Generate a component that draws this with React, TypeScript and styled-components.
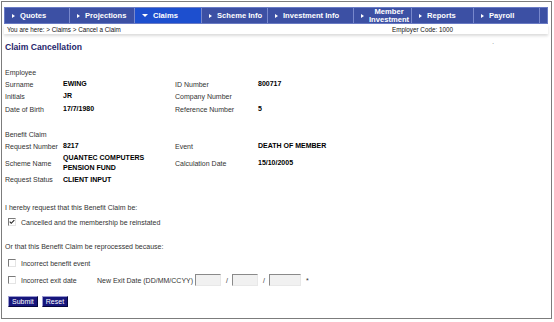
import React from 'react';
import styled, { createGlobalStyle } from 'styled-components';

const GlobalStyle = createGlobalStyle`
  body {
    margin: 0;
    background: #ffffff;
    font-family: "Liberation Sans", Arial, sans-serif;
  }
`;

const Frame = styled.div`
  margin: 1px 0 0 1px;
  width: 551px;
  height: 318px;
  box-sizing: border-box;
  border: 1px solid #7c7c7c;
  padding: 5px 3px 0 2px;
`;

const Nav = styled.div`
  display: flex;
  height: 17px;
  background: #3c50a4;
  border: 1px solid #6a7bc4;
  box-sizing: border-box;
`;

const Tab = styled.div<{ $w: number; $active?: boolean }>`
  width: ${(p) => p.$w}px;
  flex: none;
  display: flex;
  align-items: center;
  gap: 5px;
  padding-left: 7px;
  box-sizing: border-box;
  background: ${(p) => (p.$active ? '#1d4fcf' : 'transparent')};
  border-right: 1px solid #7888cc;
  color: #ffffff;
  font-weight: bold;
  font-size: 7.6px;
  line-height: 7.5px;
  white-space: nowrap;
`;

const Arrow = styled.span<{ $down?: boolean }>`
  width: 0;
  height: 0;
  flex: none;
  ${(p) =>
    p.$down
      ? `border-left: 3px solid transparent;
         border-right: 3px solid transparent;
         border-top: 3px solid #ffffff;`
      : `border-top: 2.5px solid transparent;
         border-bottom: 2.5px solid transparent;
         border-left: 3px solid #ffffff;`}
`;

const Stack = styled.span`
  display: flex;
  flex-direction: column;
  align-items: center;
`;

const Crumbs = styled.div`
  display: grid;
  grid-template-columns: 385px 1fr;
  height: 10px;
  align-items: center;
  padding-left: 3px;
  font-size: 6.3px;
  color: #111111;
  box-shadow: 0 2px 3px rgba(0, 0, 0, 0.14);
`;

const TitleRow = styled.div`
  display: flex;
  justify-content: space-between;
  margin-top: 8px;
  padding-left: 1px;
`;

const Title = styled.h1`
  margin: 0;
  font-size: 8.6px;
  line-height: 11px;
  font-weight: bold;
  color: #1f1f6b;
`;

const Dot = styled.span`
  align-self: flex-start;
  margin: -3px 54px 0 0;
  font-size: 6px;
  line-height: 6px;
  color: #333;
`;

const Body = styled.div`
  padding-left: 1px;
  font-size: 7px;
  color: #333333;
`;

const Section = styled.div<{ $top: number }>`
  display: grid;
  grid-template-columns: 58px 112px 83px 1fr;
  grid-auto-rows: minmax(12.3px, auto);
  align-items: center;
  margin-top: ${(p) => p.$top}px;
`;

const Heading = styled.div`
  grid-column: 1 / -1;
`;

const Label = styled.div``;

const Value = styled.div`
  font-weight: bold;
  color: #000000;
  line-height: 10.5px;
`;

const Para = styled.div<{ $top: number }>`
  margin-top: ${(p) => p.$top}px;
  line-height: 12px;
`;

const CheckRow = styled.label<{ $top: number }>`
  display: flex;
  align-items: center;
  height: 14px;
  margin-top: ${(p) => p.$top}px;
  padding-left: 3px;
`;

const Box = styled.span`
  width: 8px;
  height: 8px;
  flex: none;
  box-sizing: border-box;
  border: 1px solid;
  border-color: #7a7a7a #e4e4e4 #e4e4e4 #7a7a7a;
  background: #ffffff;
  display: flex;
  align-items: center;
  justify-content: center;
  margin-right: 5px;
`;

const CheckText = styled.span<{ $w?: number }>`
  ${(p) => (p.$w ? `width: ${p.$w}px;` : '')}
`;

const DateInput = styled.span<{ $w: number }>`
  width: ${(p) => p.$w}px;
  height: 12px;
  box-sizing: border-box;
  border: 1px solid;
  border-color: #8a8a8a #e8e8e8 #e8e8e8 #8a8a8a;
  background: #f1f1f1;
`;

const Sep = styled.span`
  margin: 0 4px 0 5px;
`;

const Buttons = styled.div`
  display: flex;
  gap: 4px;
  margin-top: 9px;
  padding-left: 3px;
`;

const Button = styled.button`
  height: 11px;
  padding: 0 3px;
  font-family: "Liberation Sans", Arial, sans-serif;
  font-size: 7px;
  line-height: 9px;
  color: #ffffff;
  background: #16167c;
  border: 1px solid;
  border-color: #9a9ad0 #05053a #05053a #9a9ad0;
`;

const Check = () => (
  <svg width="7" height="6" viewBox="0 0 7 6">
    <path d="M0.8 2.6 L2.6 4.5 L6.2 0.8" fill="none" stroke="#222" strokeWidth="1.3" />
  </svg>
);

const tabs = [
  { label: 'Quotes', w: 65 },
  { label: 'Projections', w: 65 },
  { label: 'Claims', w: 67, active: true },
  { label: 'Scheme Info', w: 66 },
  { label: 'Investment Info', w: 86 },
  { label: 'Member Investment', w: 58, stack: true },
  { label: 'Reports', w: 62 },
  { label: 'Payroll', w: 66 },
];

export default function App() {
  return (
    <>
      <GlobalStyle />
      <Frame>
        <Nav>
          {tabs.map((t) => (
            <Tab key={t.label} $w={t.w} $active={t.active}>
              <Arrow $down={t.active} />
              {t.stack ? (
                <Stack>
                  <span>Member</span>
                  <span>Investment</span>
                </Stack>
              ) : (
                t.label
              )}
            </Tab>
          ))}
        </Nav>
        <Crumbs>
          <span>You are here: &gt; Claims &gt; Cancel a Claim</span>
          <span>Employer Code: 1000</span>
        </Crumbs>
        <TitleRow>
          <Title>Claim Cancellation</Title>
          <Dot>.</Dot>
        </TitleRow>
        <Body>
          <Section $top={13}>
            <Heading>Employee</Heading>
            <Label>Surname</Label>
            <Value>EWING</Value>
            <Label>ID Number</Label>
            <Value>800717</Value>
            <Label>Initials</Label>
            <Value>JR</Value>
            <Label>Company Number</Label>
            <Value />
            <Label>Date of Birth</Label>
            <Value>17/7/1980</Value>
            <Label>Reference Number</Label>
            <Value>5</Value>
          </Section>
          <Section $top={13}>
            <Heading>Benefit Claim</Heading>
            <Label>Request Number</Label>
            <Value>8217</Value>
            <Label>Event</Label>
            <Value>DEATH OF MEMBER</Value>
            <Label>Scheme Name</Label>
            <Value>
              QUANTEC COMPUTERS
              <br />
              PENSION FUND
            </Value>
            <Label>Calculation Date</Label>
            <Value>15/10/2005</Value>
            <Label>Request Status</Label>
            <Value>CLIENT INPUT</Value>
          </Section>
          <Para $top={16}>I hereby request that this Benefit Claim be:</Para>
          <CheckRow $top={1}>
            <Box>
              <Check />
            </Box>
            <CheckText>Cancelled and the membership be reinstated</CheckText>
          </CheckRow>
          <Para $top={12}>Or that this Benefit Claim be reprocessed because:</Para>
          <CheckRow $top={3}>
            <Box />
            <CheckText>Incorrect benefit event</CheckText>
          </CheckRow>
          <CheckRow $top={3}>
            <Box />
            <CheckText $w={76}>Incorrect exit date</CheckText>
            <CheckText>New Exit Date (DD/MM/CCYY)&nbsp;</CheckText>
            <DateInput $w={26} />
            <Sep>/</Sep>
            <DateInput $w={26} />
            <Sep>/</Sep>
            <DateInput $w={32} />
            <Sep>*</Sep>
          </CheckRow>
          <Buttons>
            <Button>Submit</Button>
            <Button>Reset</Button>
          </Buttons>
        </Body>
      </Frame>
    </>
  );
}
